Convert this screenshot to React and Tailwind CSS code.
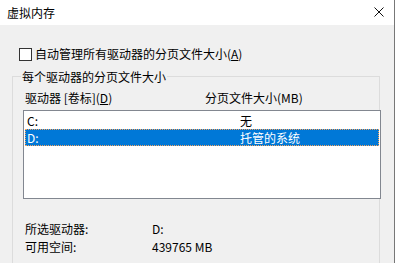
import React from 'react';

const drives = [
  { letter: 'C:', size: '无', selected: false },
  { letter: 'D:', size: '托管的系统', selected: true },
];

function DriveRow({ drive }) {
  const base = 'flex h-[17px] items-center leading-[15px]';
  if (drive.selected) {
    return (
      <div className={`${base} bg-[#0078d7] text-white border border-dotted border-[#f4a460]`}>
        <span className="w-[214px] pl-[1px]">{drive.letter}</span>
        <span>{drive.size}</span>
      </div>
    );
  }
  return (
    <div className={`${base} border border-transparent`}>
      <span className="w-[214px] pl-[1px]">{drive.letter}</span>
      <span>{drive.size}</span>
    </div>
  );
}

export default function App() {
  return (
    <div
      className="w-[395px] h-[263px] flex flex-col overflow-hidden border-r border-[#777] text-[12px] text-black"
      style={{ fontFamily: '"Noto Sans CJK SC", "Noto Sans", sans-serif' }}
    >
      {/* title bar */}
      <div className="h-[25px] shrink-0 bg-white flex items-center justify-between pl-[7px] pr-[10px]">
        <span className="leading-[16px]">虚拟内存</span>
        <svg width="10" height="10" viewBox="0 0 10 10" className="mt-[-1px]">
          <path d="M0.5 0.5 L9.5 9.5 M9.5 0.5 L0.5 9.5" stroke="#111" strokeWidth="1" />
        </svg>
      </div>

      <div className="flex-1 bg-[#f0f0f0] pl-[12px] pr-[14px] pt-[21px]">
        <label className="flex items-center h-[16px] pl-[7px]">
          <span className="w-[13px] h-[13px] border border-[#333] bg-white shrink-0" />
          <span className="ml-[3px] leading-[16px]">
            自动管理所有驱动器的分页文件大小(<span className="underline">A</span>)
          </span>
        </label>

        <fieldset className="mt-[8px] h-[220px] border border-[#dcdcdc]">
          <legend className="ml-[8px] px-[1px] leading-[13px]">每个驱动器的分页文件大小</legend>

          <div className="flex pl-[12px] pt-[7px] leading-[16px]">
            <span className="w-[180px]">
              驱动器 [卷标](<span className="underline">D</span>)
            </span>
            <span>分页文件大小(MB)</span>
          </div>

          <div className="ml-[10px] mr-[-2px] mt-[4px] h-[89px] border border-[#828790] bg-white p-[1px]">
            {drives.map((d) => (
              <DriveRow key={d.letter} drive={d} />
            ))}
          </div>

          <div className="pl-[12px] mt-[21px] leading-[18px]">
            <div className="flex">
              <span className="w-[127px]">所选驱动器:</span>
              <span>D:</span>
            </div>
            <div className="flex">
              <span className="w-[127px]">可用空间:</span>
              <span>439765 MB</span>
            </div>
          </div>
        </fieldset>
      </div>
    </div>
  );
}
